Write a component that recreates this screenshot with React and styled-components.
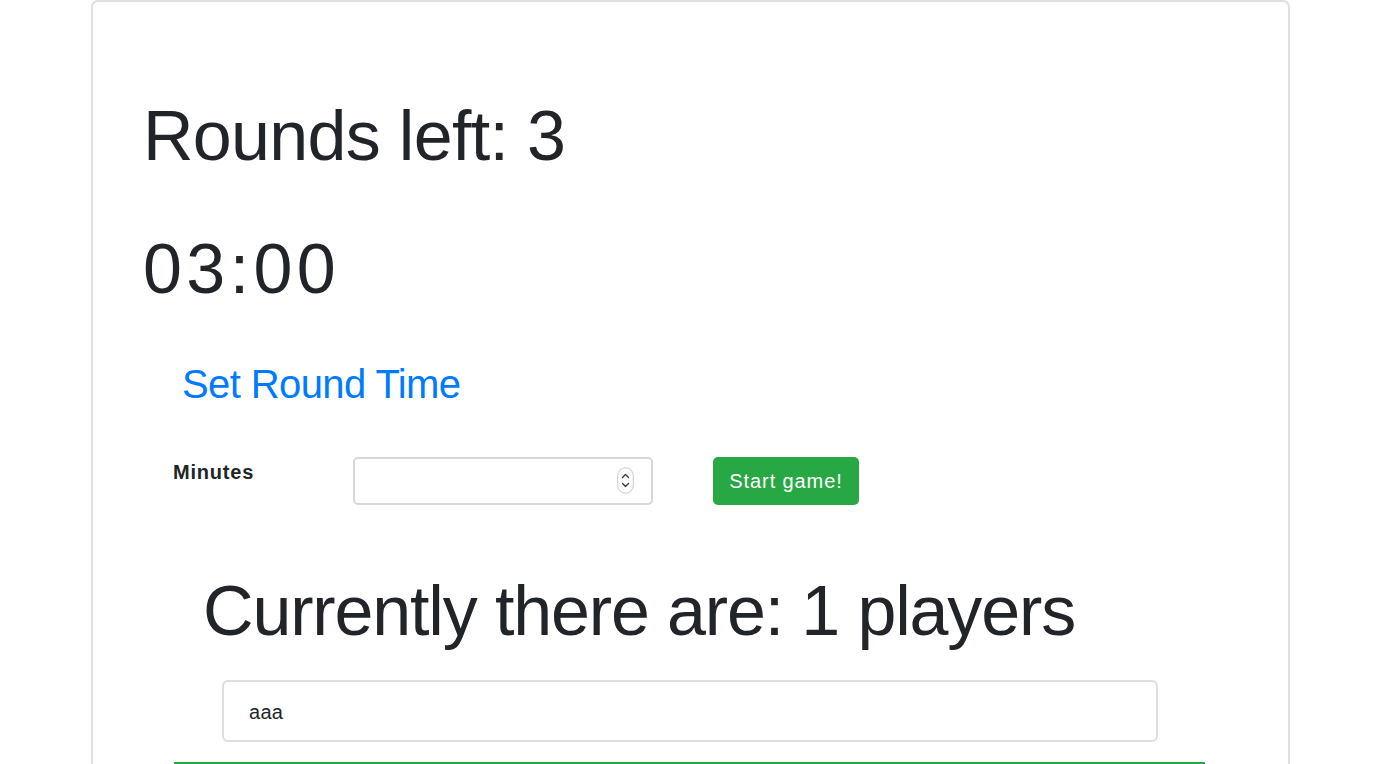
import React from "react";
import styled, { createGlobalStyle } from "styled-components";

const Global = createGlobalStyle`
  html, body {
    margin: 0;
    padding: 0;
    height: 764px;
    overflow: hidden;
    background: #ffffff;
  }
  body {
    font-family: "Liberation Sans", Arial, sans-serif;
    color: #212529;
  }
  * { box-sizing: border-box; }
`;

const Page = styled.div`
  padding-left: 91px;
`;

const Card = styled.div`
  width: 1199px;
  min-height: 900px;
  border: 2px solid #e0e0e0;
  border-radius: 7px;
  padding: 92px 0 0 50px;
`;

const Display = styled.h1`
  margin: ${(p) => p.$top || 0}px 0 0 ${(p) => p.$indent || 0}px;
  font-size: 70px;
  line-height: 84px;
  font-weight: 400;
  letter-spacing: ${(p) => p.$track ?? -1}px;
  color: #212529;
`;

const SubTitle = styled.h2`
  margin: 49px 0 0 39px;
  font-size: 40px;
  line-height: 48px;
  font-weight: 400;
  letter-spacing: -0.6px;
  color: #007bff;
`;

const FormRow = styled.div`
  display: flex;
  align-items: flex-start;
  margin: 49px 0 0 30px;
`;

const Label = styled.label`
  width: 180px;
  font-size: 20px;
  line-height: 30px;
  font-weight: 700;
  letter-spacing: 0.8px;
  color: #212529;
`;

const InputWrap = styled.div`
  position: relative;
  width: 300px;
  height: 48px;
`;

const NumberInput = styled.input`
  width: 100%;
  height: 100%;
  border: 2px solid #d4d7db;
  border-radius: 5px;
  padding: 0 15px;
  font-size: 20px;
  font-family: inherit;
  color: #495057;
  background: #fff;
  outline: none;
  -moz-appearance: textfield;
  &::-webkit-inner-spin-button,
  &::-webkit-outer-spin-button {
    -webkit-appearance: none;
    margin: 0;
  }
`;

const Spinner = styled.svg`
  position: absolute;
  right: 19px;
  top: 10px;
  width: 17px;
  height: 27px;
  pointer-events: none;
`;

const StartButton = styled.button`
  margin-left: 60px;
  width: 146px;
  height: 48px;
  border: none;
  border-radius: 5px;
  background: #28a745;
  color: #ffffff;
  font-family: inherit;
  font-size: 20px;
  line-height: 30px;
  letter-spacing: 0.9px;
  padding: 0;
`;

const PlayerBox = styled.div`
  margin: 27px 0 0 79px;
  width: 936px;
  height: 62px;
  border: 2px solid #dedede;
  border-radius: 6px;
  padding: 15px 25px 13px;
  font-size: 20px;
  line-height: 30px;
  letter-spacing: 0.3px;
  color: #212529;
`;

const Divider = styled.div`
  margin: 20px 0 0 31px;
  width: 1031px;
  border-top: 2px solid #28a745;
  height: 40px;
`;

export default function App() {
  return (
    <>
      <Global />
      <Page>
        <Card>
          <Display $track={-0.7}>Rounds left: 3</Display>
          <Display $top={49} $track={4.4}>03:00</Display>
          <SubTitle>Set Round Time</SubTitle>
          <FormRow>
            <Label htmlFor="minutes">Minutes</Label>
            <InputWrap>
              <NumberInput id="minutes" type="number" />
              <Spinner viewBox="0 0 17 27">
                <rect x="0.75" y="0.75" width="15.5" height="25.5" rx="7.75" fill="#fff" stroke="#c9c9c9" strokeWidth="1" />
                <path d="M5.5 10.5 L8.5 7.5 L11.5 10.5" fill="none" stroke="#3a3a3a" strokeWidth="1.4" strokeLinecap="round" strokeLinejoin="round" />
                <path d="M5.5 16.5 L8.5 19.5 L11.5 16.5" fill="none" stroke="#3a3a3a" strokeWidth="1.4" strokeLinecap="round" strokeLinejoin="round" />
              </Spinner>
            </InputWrap>
            <StartButton type="button">Start game!</StartButton>
          </FormRow>
          <Display $top={64} $indent={60} $track={-1.15}>Currently there are: 1 players</Display>
          <PlayerBox>aaa</PlayerBox>
          <Divider />
        </Card>
      </Page>
    </>
  );
}
